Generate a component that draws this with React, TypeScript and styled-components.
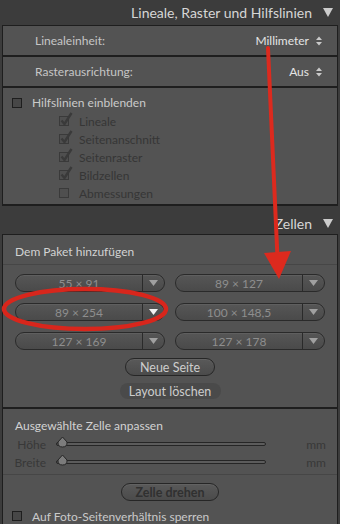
import styled, { createGlobalStyle } from "styled-components";

const GlobalStyle = createGlobalStyle`
	body {
		margin: 0;
		background: #3c3c3c;
		font-family: Lato, "Liberation Sans", sans-serif;
	}
`;

const Page = styled.div`
	position: relative;
	width: 340px;
	height: 524px;
	overflow: hidden;
	background: #3c3c3c;
`;

const Header = styled.div<{ $h: number; $pt?: number }>`
	height: ${(p) => p.$h}px;
	box-sizing: border-box;
	padding: ${(p) => p.$pt ?? 0}px 7px 0 0;
	display: flex;
	justify-content: flex-end;
	align-items: center;
	gap: 11px;
	color: #d6d6d6;
	font-size: 14px;
`;

const Panel = styled.div`
	margin: 0 2px;
	background: #535353;
	border: 1px solid #1e1e1e;
	border-bottom-width: 2px;
`;

const SettingRow = styled.div`
	height: 29px;
	display: flex;
	align-items: center;
	justify-content: space-between;
	padding: 0 15px 0 32px;
	border-bottom: 2px solid #1e1e1e;
	font-size: 12px;
	color: #c6c6c6;
`;

const Value = styled.span`
	display: flex;
	align-items: center;
	gap: 7px;
	color: #e4e4e4;
`;

const CheckSection = styled.div<{ $pt: number; $pb: number }>`
	padding: ${(p) => p.$pt}px 0 ${(p) => p.$pb}px 9px;
	display: flex;
	flex-direction: column;
`;

const CheckRow = styled.div<{ $indent?: boolean; $dim?: boolean; $h: number }>`
	display: flex;
	align-items: center;
	gap: 10px;
	height: ${(p) => p.$h}px;
	padding-left: ${(p) => (p.$indent ? 47 : 0)}px;
	font-size: 12px;
	color: ${(p) => (p.$dim ? "#363636" : "#cacaca")};
`;

const Box = styled.span<{ $dim?: boolean }>`
	position: relative;
	width: 8px;
	height: 8px;
	border: 1px solid ${(p) => (p.$dim ? "#3a3a3a" : "#1e1e1e")};
	background: ${(p) => (p.$dim ? "#4f4f4f" : "#474747")};
	flex: none;
`;

const Tick = styled.svg`
	position: absolute;
	left: 0;
	top: -5px;
`;

const SubHead = styled.div<{ $h: number; $pt: number; $line?: boolean }>`
	height: ${(p) => p.$h}px;
	box-sizing: border-box;
	padding: ${(p) => p.$pt}px 10px 0 12px;
	display: flex;
	align-items: center;
	font-size: 12px;
	color: #d2d2d2;
	border-bottom: ${(p) => (p.$line ? "1px solid #464646" : "none")};
`;

const PillGrid = styled.div`
	display: grid;
	grid-template-columns: 150px 150px;
	column-gap: 10px;
	row-gap: 11px;
	padding: 9px 0 0 12px;
`;

const Pill = styled.div`
	height: 18px;
	box-sizing: border-box;
	display: flex;
	border: 1px solid #2a2a2a;
	border-radius: 9px;
	background: linear-gradient(#565656, #4a4a4a);
	box-shadow: inset 0 1px 0 #5f5f5f;
	font-size: 12px;
	color: #8e8e8e;
`;

const PillText = styled.span`
	flex: 1;
	display: flex;
	align-items: center;
	justify-content: center;
	border-right: 1px solid #2a2a2a;
`;

const PillArrow = styled.span`
	width: 21px;
	display: flex;
	align-items: center;
	justify-content: center;
`;

const ButtonStack = styled.div<{ $pt: number; $pb: number }>`
	display: flex;
	flex-direction: column;
	align-items: center;
	gap: 7px;
	padding: ${(p) => p.$pt}px 0 ${(p) => p.$pb}px;
`;

const Button = styled.div<{ $w: number; $h: number; $flat?: boolean; $dim?: boolean }>`
	width: ${(p) => p.$w}px;
	height: ${(p) => p.$h}px;
	box-sizing: border-box;
	display: flex;
	align-items: center;
	justify-content: center;
	border-radius: 9px;
	border: 1px solid ${(p) => (p.$flat ? "transparent" : "#262626")};
	background: ${(p) =>
		p.$flat ? "#4a4a4a" : "linear-gradient(#595959, #4b4b4b)"};
	box-shadow: ${(p) => (p.$flat ? "none" : "inset 0 1px 0 #626262")};
	font-size: 12.5px;
	color: ${(p) => (p.$dim ? "#303030" : "#cdcdcd")};
	font-weight: ${(p) => (p.$dim ? 700 : 400)};
`;

const Divider = styled.div`
	height: 2px;
	background: #1e1e1e;
`;

const SliderRow = styled.div`
	display: flex;
	align-items: center;
	height: 18px;
	padding-right: 11px;
	font-size: 12px;
	color: #383838;
`;

const SliderLabel = styled.span`
	width: 43px;
	text-align: right;
	flex: none;
`;

const Track = styled.div`
	position: relative;
	margin-left: 10px;
	width: 208px;
	height: 2px;
	border: 1px solid #262626;
	border-radius: 2px;
	background: #5c5c5c;
`;

const Thumb = styled.svg`
	position: absolute;
	left: 0;
	top: -7px;
`;

const Unit = styled.span`
	margin-left: auto;
`;

const LowerBlock = styled.div`
	margin-top: 3px;
	border-top: 1px solid #464646;
`;

const Overlay = styled.svg`
	position: absolute;
	left: 0;
	top: 0;
	pointer-events: none;
`;

function UpDown() {
	return (
		<svg width="6" height="10" viewBox="0 0 6 10">
			<path d="M0 4 L3 0.5 L6 4Z M0 6 L3 9.5 L6 6Z" fill="#cacaca" />
		</svg>
	);
}

function Triangle({ w, h, color }: { w: number; h: number; color: string }) {
	return (
		<svg width={w} height={h} viewBox={`0 0 ${w} ${h}`}>
			<path d={`M0 0 L${w} 0 L${w / 2} ${h}Z`} fill={color} />
		</svg>
	);
}

function Check({
	label,
	checked,
	indent,
	dim,
	h = 18,
}: {
	label: string;
	checked?: boolean;
	indent?: boolean;
	dim?: boolean;
	h?: number;
}) {
	return (
		<CheckRow $indent={indent} $dim={dim} $h={h}>
			<Box $dim={dim}>
				{checked && (
					<Tick width="13" height="14" viewBox="0 0 13 14">
						<path
							d="M1.5 8.5 L4.5 12 L11.5 1"
							stroke="#3a3a3a"
							strokeWidth="2.4"
							fill="none"
						/>
					</Tick>
				)}
			</Box>
			{label}
		</CheckRow>
	);
}

const sizes = [
	"55 × 91",
	"89 × 127",
	"89 × 254",
	"100 × 148,5",
	"127 × 169",
	"127 × 178",
];

function Slider({ label }: { label: string }) {
	return (
		<SliderRow>
			<SliderLabel>{label}</SliderLabel>
			<Track>
				<Thumb width="11" height="12" viewBox="0 0 11 12">
					<path
						d="M5.5 1 L10 6 Q10.5 11 5.5 11 Q0.5 11 1 6Z"
						fill="#7c7c7c"
						stroke="#262626"
						strokeWidth="1"
					/>
				</Thumb>
			</Track>
			<Unit>mm</Unit>
		</SliderRow>
	);
}

export default function App() {
	return (
		<Page>
			<GlobalStyle />
			<Header $h={25}>
				Lineale, Raster und Hilfslinien
				<Triangle w={10} h={9} color="#cccccc" />
			</Header>
			<Panel>
				<SettingRow>
					Linealeinheit:
					<Value>
						Millimeter <UpDown />
					</Value>
				</SettingRow>
				<SettingRow>
					Rasterausrichtung:
					<Value>
						Aus <UpDown />
					</Value>
				</SettingRow>
				<CheckSection $pt={5} $pb={2}>
					<Check label="Hilfslinien einblenden" h={19} />
					<Check label="Lineale" checked indent dim />
					<Check label="Seitenanschnitt" checked indent dim />
					<Check label="Seitenraster" checked indent dim />
					<Check label="Bildzellen" checked indent dim />
					<Check label="Abmessungen" indent dim />
				</CheckSection>
			</Panel>
			<Header $h={28} $pt={6}>
				Zellen
				<Triangle w={10} h={9} color="#cccccc" />
			</Header>
			<Panel>
				<SubHead $h={30} $pt={3} $line>
					Dem Paket hinzufügen
				</SubHead>
				<PillGrid>
					{sizes.map((s, i) => (
						<Pill key={s}>
							<PillText>{s}</PillText>
							<PillArrow>
								<Triangle w={9} h={6} color={i === 2 ? "#f2f2f2" : "#a0a0a0"} />
							</PillArrow>
						</Pill>
					))}
				</PillGrid>
				<ButtonStack $pt={8} $pb={8}>
					<Button $w={90} $h={18}>
						Neue Seite
					</Button>
					<Button $w={101} $h={16} $flat>
						Layout löschen
					</Button>
				</ButtonStack>
				<Divider />
				<SubHead $h={26} $pt={6}>
					Ausgewählte Zelle anpassen
				</SubHead>
				<Slider label="Höhe" />
				<Slider label="Breite" />
				<LowerBlock>
					<ButtonStack $pt={8} $pb={0}>
						<Button $w={98} $h={18} $dim>
							Zelle drehen
						</Button>
					</ButtonStack>
				</LowerBlock>
				<CheckSection $pt={6} $pb={10}>
					<Check label="Auf Foto-Seitenverhältnis sperren" />
				</CheckSection>
			</Panel>
			<Overlay width="340" height="524" viewBox="0 0 340 524">
				<path
					d="M268 48 L277.5 258"
					stroke="#dc2a1e"
					strokeWidth="4"
					strokeLinecap="round"
				/>
				<path d="M264 253 L291 251 L279 279Z" fill="#dc2a1e" />
				<ellipse
					cx="85"
					cy="309"
					rx="81"
					ry="20"
					fill="none"
					stroke="#d8261c"
					strokeWidth="4.5"
				/>
			</Overlay>
		</Page>
	);
}
